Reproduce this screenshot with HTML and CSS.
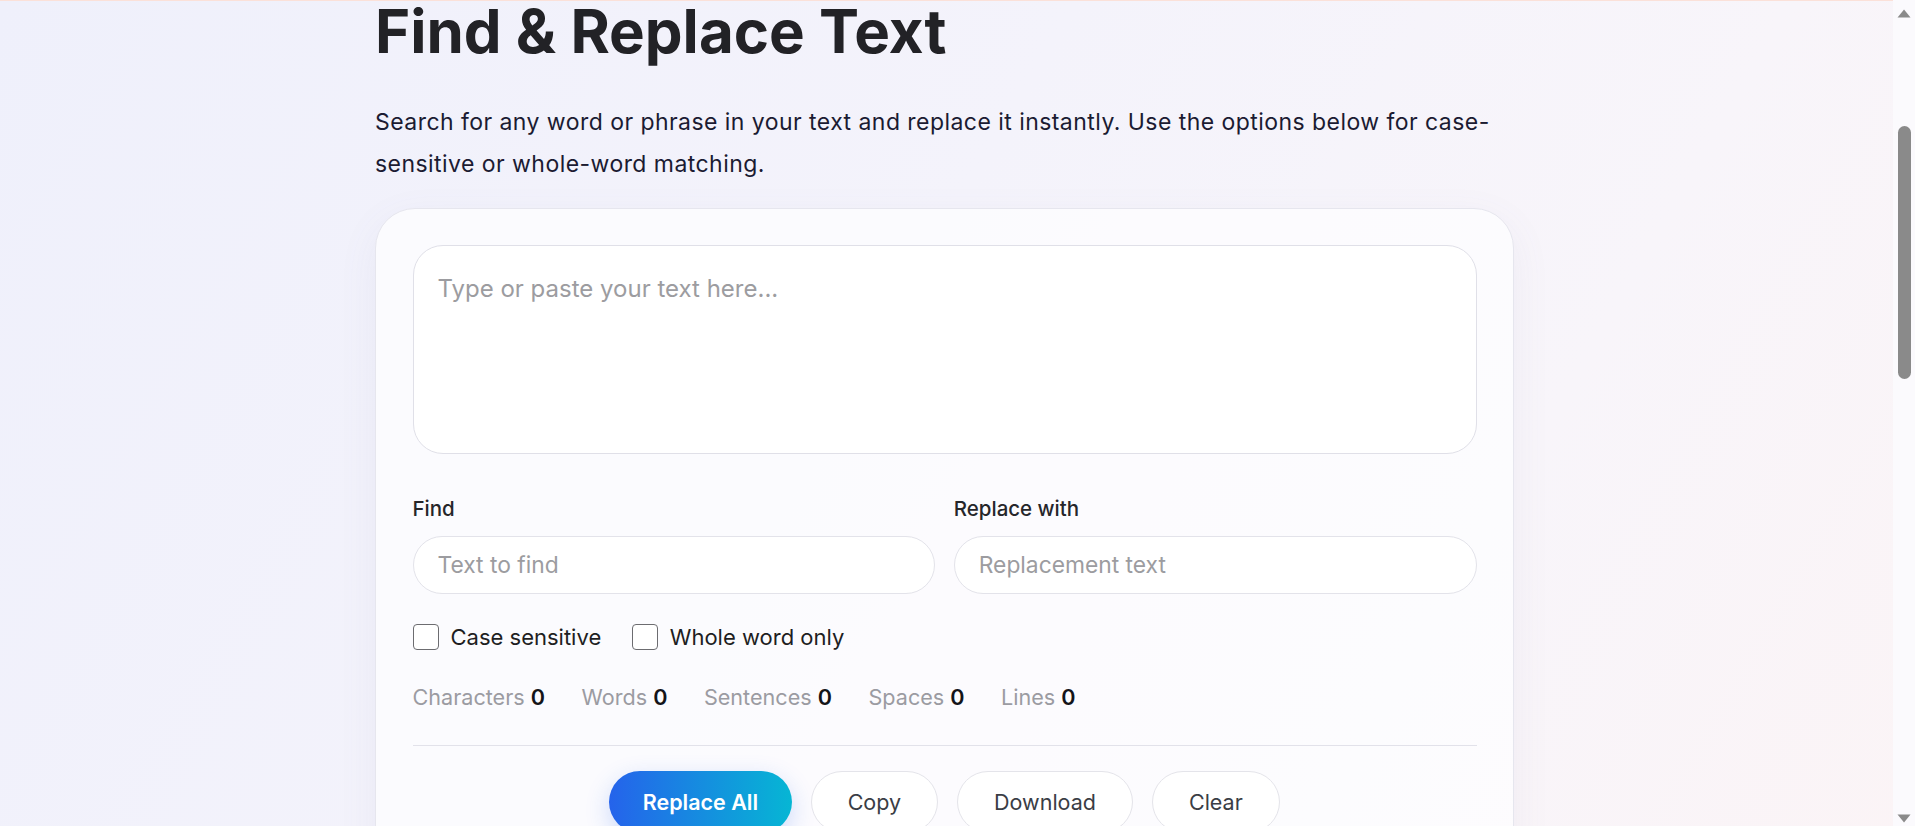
FILE: index.html
```html
<!DOCTYPE html>
<html lang="en">
<head>
<meta charset="utf-8">
<title>Find &amp; Replace Text</title>
<link rel="stylesheet" href="styles.css">
</head>
<body>
<div class="hero-top"></div>
<main class="page">
  <h1 class="title">Find &amp; Replace Text</h1>
  <p class="intro">Search for any word or phrase in your text and replace it instantly. Use the options below for case-sensitive or whole-word matching.</p>

  <section class="card">
    <textarea class="editor" placeholder="Type or paste your text here..."></textarea>

    <div class="fields">
      <div class="field">
        <label class="field-label" for="find">Find</label>
        <input class="field-input" id="find" type="text" placeholder="Text to find">
      </div>
      <div class="field">
        <label class="field-label" for="replace">Replace with</label>
        <input class="field-input" id="replace" type="text" placeholder="Replacement text">
      </div>
    </div>

    <div class="options">
      <label class="option"><input class="check" type="checkbox"><span>Case sensitive</span></label>
      <label class="option"><input class="check" type="checkbox"><span>Whole word only</span></label>
    </div>

    <div class="stats">
      <span class="stat">Characters <b>0</b></span>
      <span class="stat">Words <b>0</b></span>
      <span class="stat">Sentences <b>0</b></span>
      <span class="stat">Spaces <b>0</b></span>
      <span class="stat">Lines <b>0</b></span>
    </div>

    <div class="divider"></div>

    <div class="actions">
      <button class="btn btn-primary" type="button">Replace All</button>
      <button class="btn" type="button">Copy</button>
      <button class="btn" type="button">Download</button>
      <button class="btn" type="button">Clear</button>
    </div>
  </section>
</main>

<div class="scrollbar" aria-hidden="true">
  <svg class="sb-arrow sb-up" width="14" height="9" viewBox="0 0 14 9"><path d="M7 0.5 L13.5 8.5 L0.5 8.5 Z" fill="#8a8a8a"/></svg>
  <div class="sb-thumb"></div>
  <svg class="sb-arrow sb-down" width="14" height="9" viewBox="0 0 14 9"><path d="M0.5 0.5 L13.5 0.5 L7 8.5 Z" fill="#8a8a8a"/></svg>
</div>

<script src="script.js"></script>
</body>
</html>
```

FILE: styles.css
```css
html, body {
  margin: 0;
  padding: 0;
}

body {
  min-height: 2586px;
  font-family: Inter, "Noto Sans", "Liberation Sans", sans-serif;
  color: #1c1c30;
  background: linear-gradient(120deg, #eff0fb 0%, #f4f3fb 45%, #f8f5fa 75%, #fbf4f6 100%) fixed;
}

.hero-top {
  height: 355px;
  border-bottom: 1px solid #fbe1d9;
  box-sizing: border-box;
}

.page {
  width: 1139px;
  padding-right: 26px;
  margin: 0 auto;
}

.title {
  margin: -3px 0 0;
  font-size: 60px;
  line-height: 66px;
  font-weight: 700;
  color: #222226;
  letter-spacing: 0;
}

.intro {
  margin: 38px 0 0;
  font-size: 23px;
  line-height: 41.6px;
  color: #1b1b32;
  letter-spacing: 0.45px;
}

.card {
  margin-top: 22.5px;
  padding: 36.5px 36.5px 60px;
  border: 1px solid #e6e6ee;
  border-radius: 40px;
  background: rgba(253, 253, 255, 0.75);
  box-shadow: 0 12px 40px rgba(110, 110, 160, 0.07);
}

.editor {
  display: block;
  width: 100%;
  height: 208.5px;
  box-sizing: border-box;
  padding: 25px 24px;
  border: 1px solid #e0e0e8;
  border-radius: 30px;
  background: #ffffff;
  font-family: inherit;
  font-size: 24px;
  line-height: 36px;
  color: #1c1c30;
  resize: none;
  outline: none;
}

.editor::placeholder,
.field-input::placeholder {
  color: #9c9ca0;
}

.fields {
  display: grid;
  grid-template-columns: 1fr 1fr;
  column-gap: 18.5px;
  margin-top: 40px;
}

.field {
  display: flex;
  flex-direction: column;
}

.field-label {
  font-size: 20.5px;
  line-height: 30px;
  font-weight: 500;
  color: #26262a;
  margin-bottom: 12.5px;
}

.field-input {
  height: 57.5px;
  box-sizing: border-box;
  padding: 0 24px;
  border: 1px solid #e3e3ea;
  border-radius: 999px;
  background: #ffffff;
  font-family: inherit;
  font-size: 22.8px;
  color: #1c1c30;
  outline: none;
}

.options {
  display: flex;
  align-items: center;
  gap: 30.5px;
  margin-top: 30px;
}

.option {
  display: flex;
  align-items: center;
  gap: 12px;
  font-size: 22px;
  line-height: 26px;
  color: #1e1e22;
}

.check {
  appearance: none;
  -webkit-appearance: none;
  margin: 0;
  width: 26px;
  height: 26px;
  box-sizing: border-box;
  border: 1.5px solid #6c6c70;
  border-radius: 4px;
  background: #ffffff;
}

.stats {
  display: flex;
  gap: 36.5px;
  margin-top: 32px;
  font-size: 21.6px;
  line-height: 30px;
  color: #9b9ba2;
}

.stat b {
  font-weight: 600;
  color: #141418;
}

.divider {
  height: 1px;
  margin-top: 33.5px;
  background: #e2e2ea;
}

.actions {
  display: flex;
  justify-content: center;
  gap: 19px;
  margin-top: 24.5px;
}

.btn {
  height: 62.5px;
  padding: 0 36px;
  border: 1px solid #e4e4ea;
  border-radius: 999px;
  background: #ffffff;
  font-family: inherit;
  font-size: 21.5px;
  font-weight: 400;
  color: #3a3d45;
}

.btn-primary {
  border: none;
  padding: 0 33.5px;
  font-weight: 600;
  color: #ffffff;
  background: linear-gradient(90deg, #2563eb 0%, #06b6d4 100%);
  box-shadow: 0 8px 24px rgba(37, 99, 235, 0.22);
}

/* overlay imitation of the window scrollbar */
.scrollbar {
  position: fixed;
  top: 0;
  right: 0;
  width: 22px;
  height: 100vh;
  background: #fbfafd;
}

.sb-arrow {
  position: absolute;
  left: 4px;
  display: block;
}

.sb-up {
  top: 9px;
}

.sb-down {
  bottom: 3px;
}

.sb-thumb {
  position: absolute;
  top: 126px;
  left: 5px;
  width: 13px;
  height: 253px;
  border-radius: 7px;
  background: #8a8a8a;
}
```

FILE: script.js
```js
window.scrollTo(0, 354);
window.addEventListener('load', function () {
  window.scrollTo(0, 354);
});
```
